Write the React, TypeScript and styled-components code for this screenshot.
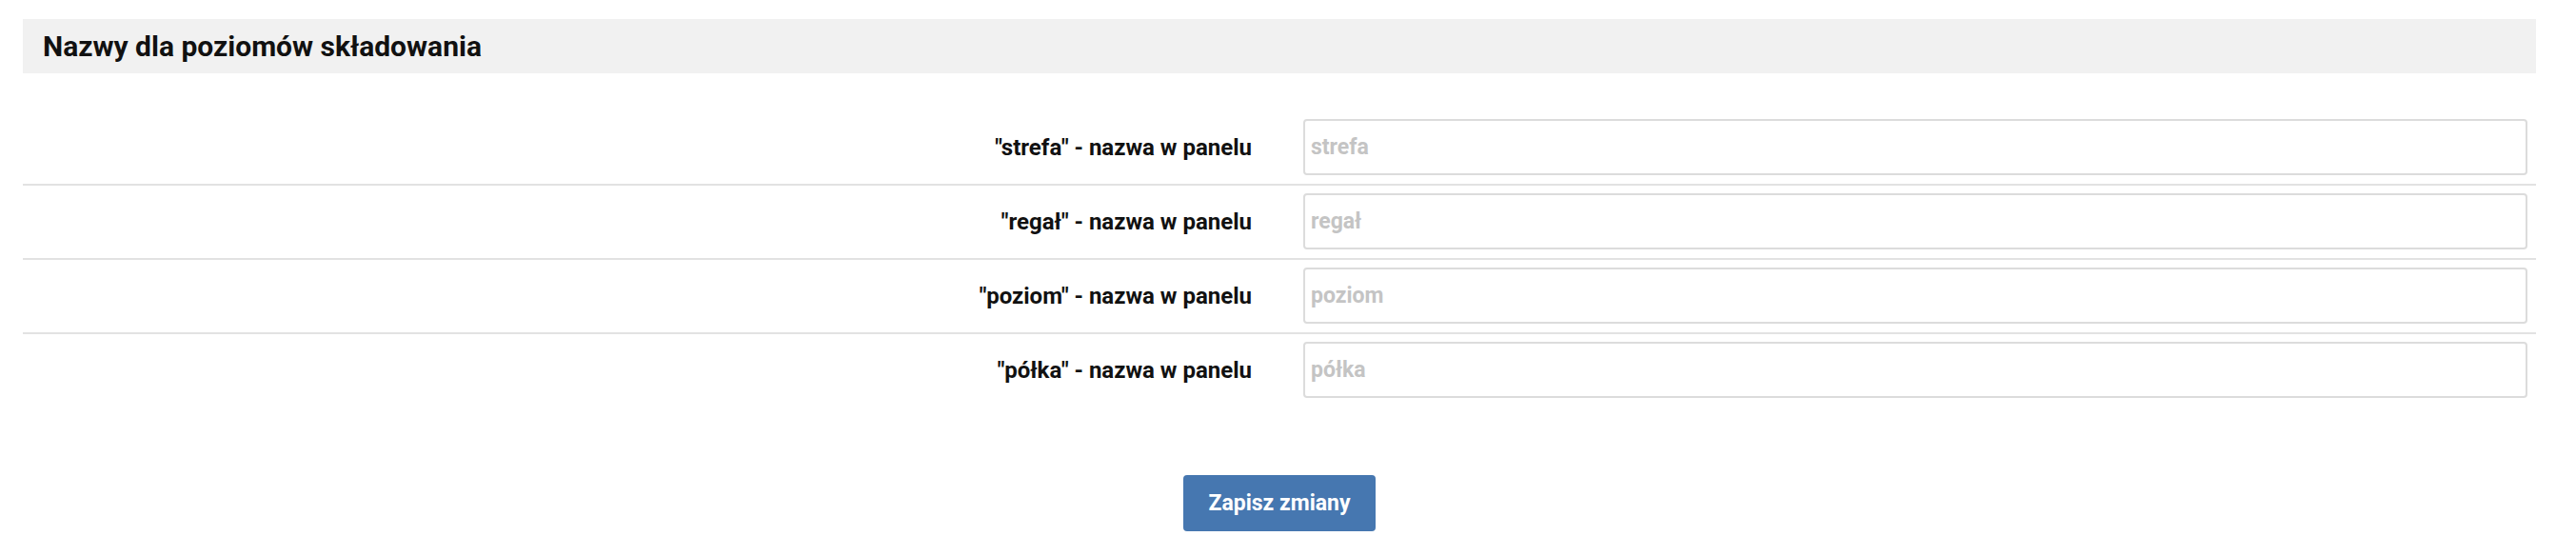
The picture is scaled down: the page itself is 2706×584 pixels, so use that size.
import React from 'react';
import styled, { createGlobalStyle } from 'styled-components';

const GlobalStyle = createGlobalStyle`
  html, body {
    margin: 0;
    padding: 0;
    background: #ffffff;
    font-family: Roboto, "Liberation Sans", Arial, sans-serif;
  }
`;

const Page = styled.div`
  padding: 20px 42px 28px 24px;
`;

const SectionHeader = styled.h2`
  margin: 0;
  height: 57px;
  display: flex;
  align-items: center;
  padding: 0 21px;
  background: #f1f1f1;
  color: #111111;
  font-size: 30px;
  font-weight: 700;
`;

const Form = styled.form`
  margin-top: 40px;
  display: flex;
  flex-direction: column;
`;

const Row = styled.div<{ $last?: boolean }>`
  display: grid;
  grid-template-columns: 1fr 1fr;
  align-items: center;
  padding: 8px 0 9px;
  border-bottom: 2px solid ${p => (p.$last ? 'transparent' : '#e2e2e2')};
`;

const Label = styled.label`
  text-align: right;
  padding-right: 29px;
  color: #111111;
  font-size: 24px;
  font-weight: 700;
`;

const InputCell = styled.div`
  padding: 0 9px 0 25px;
`;

const TextInput = styled.input`
  box-sizing: border-box;
  width: 100%;
  height: 59px;
  padding: 0 6px;
  border: 2px solid #dcdcdc;
  border-radius: 4px;
  background: #ffffff;
  font-family: Roboto, "Liberation Sans", Arial, sans-serif;
  font-size: 23px;
  font-weight: 700;
  color: #333333;
  outline: none;

  &::placeholder {
    color: #c4c4c4;
  }
`;

const Actions = styled.div`
  display: flex;
  justify-content: center;
  margin-top: 70px;
`;

const SaveButton = styled.button`
  width: 202px;
  height: 59px;
  border: none;
  border-radius: 4px;
  background: #4677b0;
  color: #ffffff;
  font-family: Roboto, "Liberation Sans", Arial, sans-serif;
  font-size: 23px;
  font-weight: 700;
  cursor: pointer;
`;

const levels = [
  { key: 'strefa', label: '"strefa" - nazwa w panelu' },
  { key: 'regał', label: '"regał" - nazwa w panelu' },
  { key: 'poziom', label: '"poziom" - nazwa w panelu' },
  { key: 'półka', label: '"półka" - nazwa w panelu' },
];

const App: React.FC = () => {
  return (
    <>
      <GlobalStyle />
      <Page>
        <SectionHeader>Nazwy dla poziomów składowania</SectionHeader>
        <Form onSubmit={e => e.preventDefault()}>
          {levels.map((level, i) => (
            <Row key={level.key} $last={i === levels.length - 1}>
              <Label htmlFor={`level-${i}`}>{level.label}</Label>
              <InputCell>
                <TextInput id={`level-${i}`} type="text" placeholder={level.key} />
              </InputCell>
            </Row>
          ))}
          <Actions>
            <SaveButton type="submit">Zapisz zmiany</SaveButton>
          </Actions>
        </Form>
      </Page>
    </>
  );
};

export default App;
